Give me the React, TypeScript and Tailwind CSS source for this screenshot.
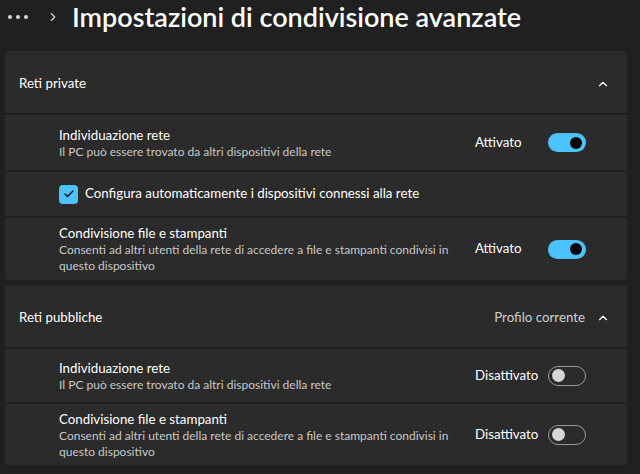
import { ChevronUp, ChevronRight, Check } from 'lucide-react';

const font = { fontFamily: 'Lato, "Noto Sans", sans-serif' };

function Toggle({ on }: { on: boolean }) {
  if (on) {
    return (
      <div className="w-[38px] h-[19px] rounded-full bg-[#4cc2ff] flex items-center justify-end pr-[4px] shrink-0">
        <div className="w-[12px] h-[12px] rounded-full bg-black" />
      </div>
    );
  }
  return (
    <div className="w-[38px] h-[20px] rounded-full border-[1.5px] border-[#9b9b9b] flex items-center pl-[3px] shrink-0">
      <div className="w-[13px] h-[13px] rounded-full bg-[#d6d6d6]" />
    </div>
  );
}

function SettingRow({
  title,
  desc,
  on,
  className,
}: {
  title: string;
  desc: React.ReactNode;
  on: boolean;
  className: string;
}) {
  return (
    <div className={`flex items-center border-t-2 border-[#1f1f1f] pl-[54px] pr-[41px] ${className}`}>
      <div className="flex-1 min-w-0">
        <div className="text-[13.3px] leading-[18px] text-white">{title}</div>
        <div className="text-[12px] leading-[16px] text-[#c8c8c8]">{desc}</div>
      </div>
      <div className="w-[73px] text-[13.3px] text-white shrink-0">{on ? 'Attivato' : 'Disattivato'}</div>
      <Toggle on={on} />
    </div>
  );
}

export default function App() {
  return (
    <div className="w-[640px] h-[474px] bg-[#202020] overflow-hidden text-white" style={font}>
      <div className="flex items-center h-[51px] pl-[8px] pb-[18px]">
        <div className="flex gap-[4px]">
          <div className="w-[4px] h-[4px] rounded-full bg-[#d6d6d6]" />
          <div className="w-[4px] h-[4px] rounded-full bg-[#d6d6d6]" />
          <div className="w-[4px] h-[4px] rounded-full bg-[#d6d6d6]" />
        </div>
        <ChevronRight className="w-[14px] h-[14px] ml-[18px] text-[#d6d6d6]" strokeWidth={2} />
        <h1 className="ml-[12px] text-[27px] font-semibold leading-none text-white">
          Impostazioni di condivisione avanzate
        </h1>
      </div>

      <div className="flex flex-col gap-[5px] pl-[5px] pr-[13px]">
        <div className="bg-[#2b2b2b] rounded-[4px]">
          <div className="h-[62px] flex items-center pl-[14px] pr-[17px] pt-[4px]">
            <span className="flex-1 text-[13.3px]">Reti private</span>
            <ChevronUp className="w-[14px] h-[14px] text-white" strokeWidth={2} />
          </div>
          <SettingRow
            className="h-[57px]"
            title="Individuazione rete"
            desc="Il PC può essere trovato da altri dispositivi della rete"
            on
          />
          <div className="h-[46px] flex items-center border-t-2 border-[#1f1f1f] pl-[54px] gap-[7px]">
            <div className="w-[19px] h-[19px] rounded-[4px] bg-[#4cc2ff] flex items-center justify-center">
              <Check className="w-[12px] h-[12px] text-black" strokeWidth={2.5} />
            </div>
            <span className="text-[13.3px]">Configura automaticamente i dispositivi connessi alla rete</span>
          </div>
          <SettingRow
            className="h-[64px]"
            title="Condivisione file e stampanti"
            desc={
              <>
                Consenti ad altri utenti della rete di accedere a file e stampanti condivisi in
                <br />
                questo dispositivo
              </>
            }
            on
          />
        </div>

        <div className="bg-[#2b2b2b] rounded-[4px]">
          <div className="h-[62px] flex items-center pl-[14px] pr-[17px] pt-[4px]">
            <span className="flex-1 text-[13.3px]">Reti pubbliche</span>
            <span className="text-[13.3px] text-[#cfcfcf] mr-[11px]">Profilo corrente</span>
            <ChevronUp className="w-[14px] h-[14px] text-white" strokeWidth={2} />
          </div>
          <SettingRow
            className="h-[55px]"
            title="Individuazione rete"
            desc="Il PC può essere trovato da altri dispositivi della rete"
            on={false}
          />
          <SettingRow
            className="h-[63px]"
            title="Condivisione file e stampanti"
            desc={
              <>
                Consenti ad altri utenti della rete di accedere a file e stampanti condivisi in
                <br />
                questo dispositivo
              </>
            }
            on={false}
          />
        </div>
      </div>
    </div>
  );
}
